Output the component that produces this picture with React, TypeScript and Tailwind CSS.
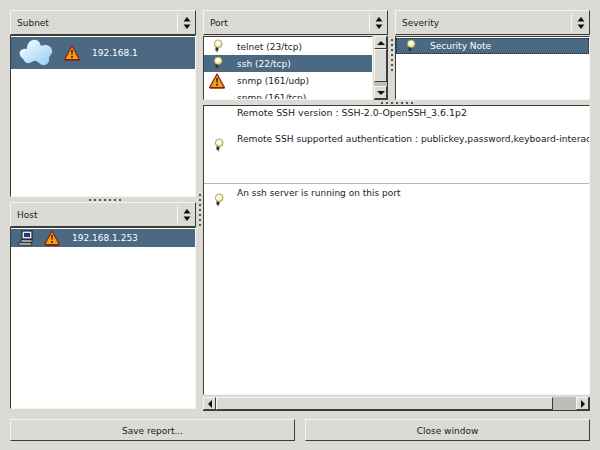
import React from 'react';

const Bulb = ({ size = 14 }: { size?: number }) => (
  <svg width={size} height={size} viewBox="0 0 14 14" className="shrink-0">
    <defs>
      <radialGradient id="bulbFill" cx="0.45" cy="0.4" r="0.65">
        <stop offset="0" stopColor="#ffffff" />
        <stop offset="0.55" stopColor="#f8f2b8" />
        <stop offset="1" stopColor="#c9bb68" />
      </radialGradient>
    </defs>
    <circle cx="7.2" cy="4.8" r="3.9" fill="url(#bulbFill)" stroke="#8f8a55" strokeWidth="0.7" />
    <path d="M4.8 8 L7.8 9.4 L6.8 12.4 L4.2 11.2 Z" fill="#33332f" />
    <path d="M5.3 12 L6.6 13.2" stroke="#666" strokeWidth="1" />
  </svg>
);

const Warn = ({ size = 16 }: { size?: number }) => (
  <svg width={size} height={size} viewBox="0 0 16 16" className="shrink-0">
    <path d="M8 1 L15.5 14.6 L0.5 14.6 Z" fill="#f0a020" stroke="#a02010" strokeWidth="1.3" strokeLinejoin="round" />
    <path d="M1 15 L15.5 15" stroke="#801808" strokeWidth="1.2" />
    <path d="M7.2 5 L8.8 5 L8.4 10 L7.6 10 Z" fill="#201000" />
    <rect x="7.2" y="11" width="1.6" height="1.6" fill="#201000" />
  </svg>
);

const Cloud = () => (
  <svg width="36" height="30" viewBox="0 0 36 30" className="shrink-0">
    <defs>
      <linearGradient id="cloudFill" x1="0" y1="0" x2="1" y2="1">
        <stop offset="0" stopColor="#ffffff" />
        <stop offset="1" stopColor="#8fcdf5" />
      </linearGradient>
    </defs>
    <path
      d="M2 17 C0 13 5 10 9 11 C9 5 13 1 18 2 C22 3 22 6 23 8 C27 6 33 7 34 12 C35 16 31 18 31 20 C32 25 28 28 24 27 C21 26 21 24 18 23 C15 22 13 26 9 25 C6 24 6 21 4 20 C3 19 2 18 2 17 Z"
      fill="url(#cloudFill)"
    />
  </svg>
);

const Computer = () => (
  <svg width="16" height="16" viewBox="0 0 16 16" className="shrink-0">
    <rect x="4" y="1" width="10" height="8" fill="#e8e8e8" stroke="#111" strokeWidth="1" />
    <rect x="6" y="3" width="6" height="4" fill="#2030a0" />
    <path d="M3 10 L14 10 L14 12 L3 12 Z" fill="#fff" stroke="#111" strokeWidth="0.8" />
    <path d="M1 13 L13 13 L14 15 L0.5 15 Z" fill="#fff" stroke="#111" strokeWidth="0.8" />
  </svg>
);

const SortArrows = () => (
  <svg width="8" height="14" viewBox="0 0 8 14">
    <path d="M4 1 L7.5 5.5 L0.5 5.5 Z" fill="#111" />
    <path d="M4 13 L7.5 8.5 L0.5 8.5 Z" fill="#111" />
  </svg>
);

const Arrow = ({ dir }: { dir: 'up' | 'down' | 'left' | 'right' }) => {
  const d = { up: 'M4 2 L8 6 L0 6 Z', down: 'M4 6 L8 2 L0 2 Z', left: 'M2 4 L6 0 L6 8 Z', right: 'M6 4 L2 0 L2 8 Z' }[dir];
  return (
    <svg width="8" height="8" viewBox="0 0 8 8">
      <path d={d} fill="#111" />
    </svg>
  );
};

const raised = 'bg-[#dcdad5] border border-t-[#f5f4f2] border-l-[#f5f4f2] border-r-[#3c3c38] border-b-[#3c3c38]';
const sunken = 'bg-white border border-t-[#3c3c38] border-l-[#3c3c38] border-r-[#f5f4f2] border-b-[#f5f4f2]';

const Header = ({ title }: { title: string }) => (
  <div className={`${raised} h-[25px] shrink-0 flex items-center pl-[6px] pr-[3px]`}>
    <span className="flex-1">{title}</span>
    <span className="w-px h-[18px] bg-[#f5f4f2] mr-[5px]" />
    <span className="w-[8px] flex mr-[1px]"><SortArrows /></span>
  </div>
);

const Row = ({ selected, className, children }: { selected?: boolean; className: string; children: React.ReactNode }) => (
  <div className={`flex items-center overflow-hidden ${selected ? 'bg-[#4b6983] text-white' : ''} ${className}`}>{children}</div>
);

const Grip = ({ vertical }: { vertical?: boolean }) => (
  <div className={`flex items-center justify-center gap-[3px] shrink-0 ${vertical ? 'flex-col w-[7px]' : 'h-[5px]'}`}>
    {[0, 1, 2, 3, 4, 5, 6].map((i) => (
      <span key={i} className="w-[2px] h-[2px] bg-[#55554f]" />
    ))}
  </div>
);

const ScrollBtn = ({ dir }: { dir: 'up' | 'down' | 'left' | 'right' }) => (
  <div className={`${raised} w-[13px] h-[13px] shrink-0 flex items-center justify-center`}>
    <Arrow dir={dir} />
  </div>
);

export default function App() {
  return (
    <div className="w-[600px] h-[450px] overflow-hidden bg-[#dcdad5] px-[10px] pt-[10px] text-[9px] leading-[12px] text-[#1a1a1a] font-['DejaVu_Sans',sans-serif] flex flex-col">
      <div className="flex h-[399px] shrink-0">
        {/* left column */}
        <div className="w-[186px] shrink-0 flex flex-col">
          <div className="h-[187px] flex flex-col shrink-0">
            <Header title="Subnet" />
            <div className={`${sunken} flex-1 pt-[1px]`}>
              <Row selected className="h-[32px] pl-[7px]">
                <Cloud />
                <span className="ml-[10px]"><Warn /></span>
                <span className="ml-[12px]">192.168.1</span>
              </Row>
            </div>
          </div>
          <div className="pl-[4px]"><Grip /></div>
          <Header title="Host" />
          <div className={`${sunken} flex-1 pt-[1px]`}>
            <Row selected className="h-[18px] pl-[7px]">
              <Computer />
              <span className="ml-[10px]"><Warn /></span>
              <span className="ml-[12px]">192.168.1.253</span>
            </Row>
          </div>
        </div>

        <div className="flex items-center"><Grip vertical /></div>

        {/* right column */}
        <div className="flex-1 flex flex-col min-w-0">
          <div className="h-[90px] flex shrink-0">
            <div className="w-[185px] shrink-0 flex flex-col">
              <Header title="Port" />
              <div className="flex-1 flex min-h-0 mt-px">
                <div className={`${sunken} flex-1 overflow-hidden pt-px`}>
                  <Row className="h-[17px] pl-[5px]"><span className="w-[16px] flex justify-center ml-[1px] -mt-[1px]"><Bulb /></span><span className="ml-[11px]">telnet (23/tcp)</span></Row>
                  <Row selected className="h-[17px] pl-[5px]"><span className="w-[16px] flex justify-center ml-[1px] -mt-[1px]"><Bulb /></span><span className="ml-[11px]">ssh (22/tcp)</span></Row>
                  <Row className="h-[17px] pl-[5px]"><span className="w-[16px] flex justify-center"><Warn /></span><span className="ml-[12px]">snmp (161/udp)</span></Row>
                  <Row className="h-[17px] pl-[5px]"><span className="w-[16px]" /><span className="ml-[12px]">snmp (161/tcp)</span></Row>
                </div>
                <div className="w-[14px] ml-[1px] shrink-0 flex flex-col bg-[#bfbdb8] border-r border-b border-[#3c3c38]">
                  <ScrollBtn dir="up" />
                  <div className={`${raised} h-[33px] w-[13px]`} />
                  <div className="flex-1" />
                  <ScrollBtn dir="down" />
                </div>
              </div>
            </div>
            <div className="flex items-center"><Grip vertical /></div>
            <div className="flex-1 flex flex-col min-w-0">
              <Header title="Severity" />
              <div className={`${sunken} flex-1 mt-px pt-[1px]`}>
                <Row selected className="h-[16px] pl-[8px] outline-1 outline-dotted outline-[#222] -outline-offset-1">
                  <Bulb />
                  <span className="ml-[12px]">Security Note</span>
                </Row>
              </div>
            </div>
          </div>
          <Grip />
          <div className={`${sunken} h-[290px] shrink-0 overflow-hidden whitespace-nowrap`}>
            <div className="h-[78px] border-b border-[#b8b6b0] flex">
              <div className="w-[30px] flex justify-center pr-[1px] pt-[32px] shrink-0"><Bulb /></div>
              <div className="pl-[3px] pt-[1px]">
                <p className="h-[26px] text-[9.4px]">Remote SSH version : SSH-2.0-OpenSSH_3.6.1p2</p>
                <p className="text-[9.13px]">Remote SSH supported authentication : publickey,password,keyboard-interactive</p>
              </div>
            </div>
            <div className="flex">
              <div className="w-[30px] flex justify-center pr-[1px] pt-[9px] shrink-0"><Bulb /></div>
              <div className="pl-[3px] pt-[3px]">An ssh server is running on this port</div>
            </div>
          </div>
          <div className="h-[14px] mt-[2px] flex bg-[#bfbdb8] border-r border-b border-[#3c3c38]">
            <ScrollBtn dir="left" />
            <div className={`${raised} w-[337px] h-[13px]`} />
            <div className="flex-1" />
            <ScrollBtn dir="right" />
          </div>
        </div>
      </div>

      {/* buttons */}
      <div className="flex gap-[10px] mt-[10px]">
        <button className={`${raised} flex-1 h-[22px] flex items-center justify-center pt-px`}>Save report...</button>
        <button className={`${raised} flex-1 h-[22px] flex items-center justify-center pt-px`}>Close window</button>
      </div>
    </div>
  );
}
